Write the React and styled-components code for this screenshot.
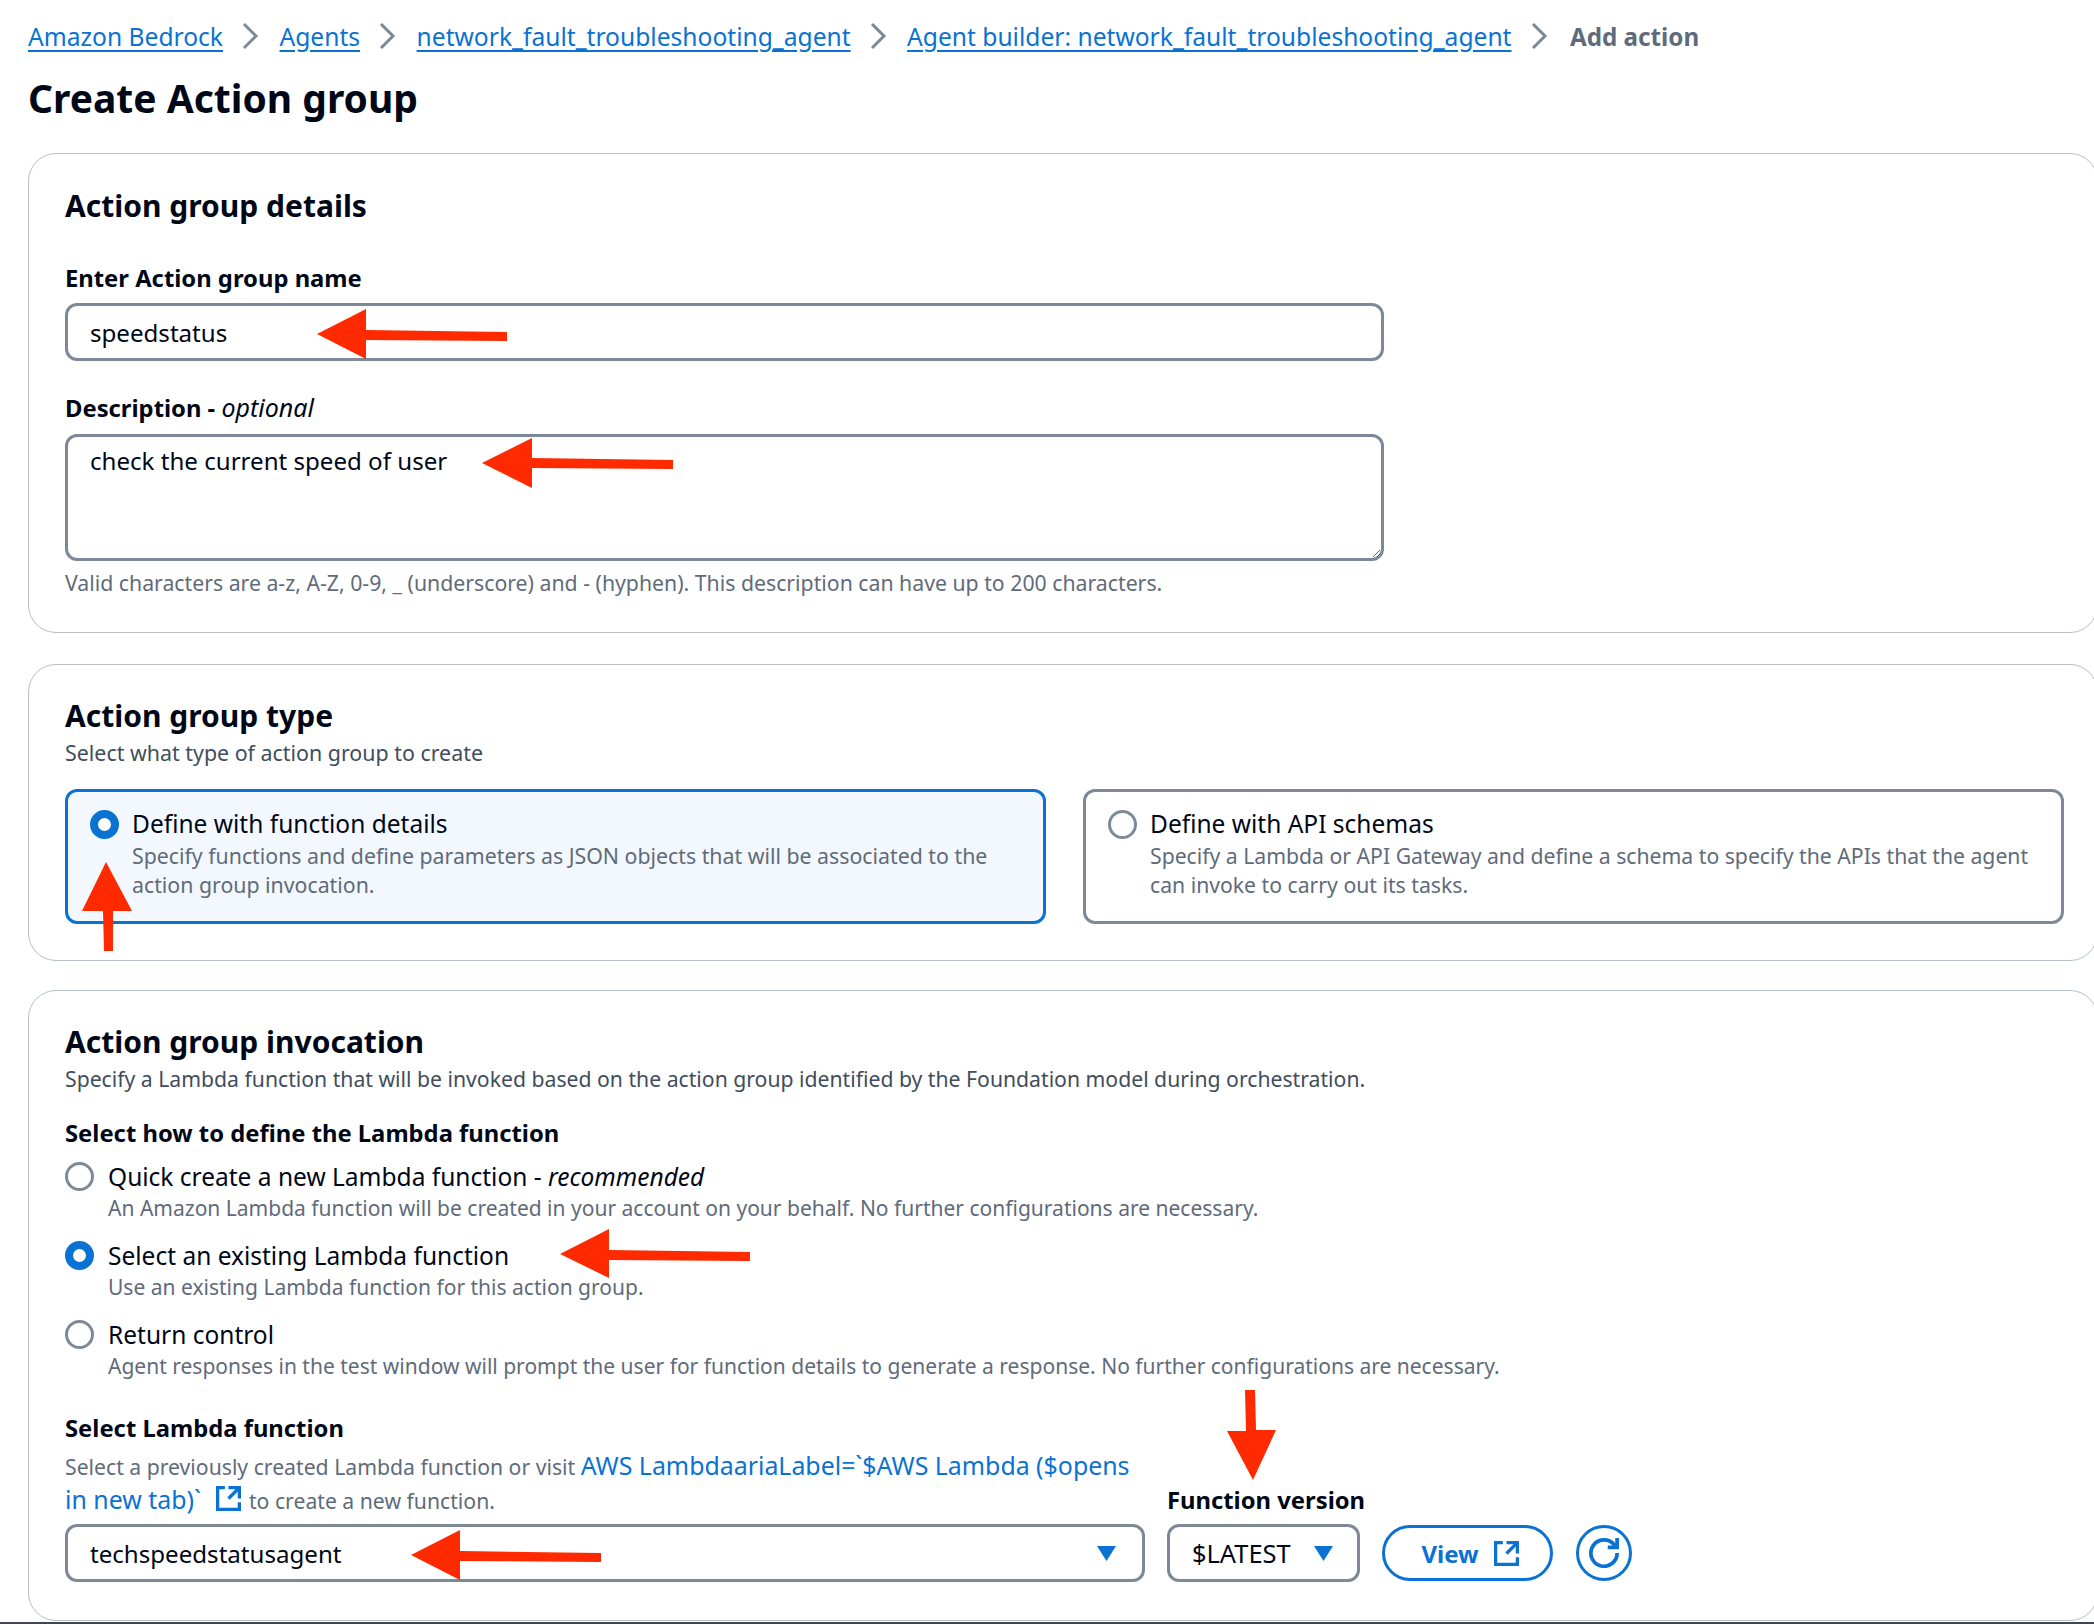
import React from 'react';
import styled, { createGlobalStyle } from 'styled-components';

const GlobalStyle = createGlobalStyle`
    html, body {
        margin: 0;
        padding: 0;
        background: #fff;
        overflow: hidden;
    }
    body {
        font-family: 'Noto Sans', 'Liberation Sans', sans-serif;
        color: #000716;
    }
`;

const Page = styled.div`
    position: relative;
    width: 2094px;
    height: 1624px;
    overflow: hidden;
    box-sizing: border-box;
    padding: 18px 0 0 28px;
    border-bottom: 2px solid #424650;
`;

const Breadcrumbs = styled.nav`
    display: flex;
    align-items: center;
    height: 36px;
    font-size: 24.6px;
`;

const Crumb = styled.a`
    color: #0972d3;
    text-decoration: underline;
    text-underline-offset: 4px;
    white-space: nowrap;
`;

const CurrentCrumb = styled.span`
    color: #5f6b7a;
    font-weight: 700;
    font-size: 24.2px;
    margin-left: 2px;
    white-space: nowrap;
`;

const ChevronWrap = styled.span`
    display: flex;
    justify-content: center;
    width: 56.5px;
    color: #7d8998;
`;

const PageTitle = styled.h1`
    margin: 15px 0 26px;
    height: 58px;
    line-height: 58px;
    font-size: 39px;
    font-weight: 700;
`;

const Card = styled.section`
    box-sizing: border-box;
    width: 2070px;
    height: ${(p) => p.$height}px;
    margin-bottom: ${(p) => p.$gap || 0}px;
    padding: ${(p) => p.$top || 29}px 32px 0 36px;
    border: 1.5px solid #b6bec9;
    border-radius: 28px;
`;

const CardTitle = styled.h2`
    margin: 0;
    height: 44px;
    line-height: 44px;
    font-size: 30px;
    font-weight: 700;
`;

const CardSub = styled.p`
    margin: 0;
    height: 30px;
    line-height: 30px;
    font-size: ${(p) => p.$size || 21.2}px;
    color: #414d5c;
`;

const FieldLabel = styled.label`
    display: block;
    height: 32px;
    line-height: 32px;
    font-size: 23.8px;
    font-weight: 700;
    margin-top: ${(p) => p.$top || 0}px;
    margin-bottom: ${(p) => p.$bottom || 0}px;
    white-space: nowrap;

    em {
        font-weight: 400;
        font-size: 25px;
    }
`;

const TextInput = styled.input`
    display: block;
    box-sizing: border-box;
    width: 1319px;
    height: 58px;
    padding: 0 22px;
    border: 3px solid #7d8998;
    border-radius: 12px;
    outline: none;
    font: 400 24.1px 'Noto Sans', sans-serif;
    color: #000716;
`;

const TextArea = styled.textarea`
    display: block;
    box-sizing: border-box;
    width: 1319px;
    height: 127px;
    padding: 6px 22px;
    border: 3px solid #7d8998;
    border-radius: 12px;
    outline: none;
    resize: vertical;
    font: 400 24.1px/36px 'Noto Sans', sans-serif;
    color: #000716;
`;

const Hint = styled.p`
    margin: 7px 0 0;
    height: 30px;
    line-height: 30px;
    font-size: 21.25px;
    color: #5f6b7a;
`;

const TileGrid = styled.div`
    display: grid;
    grid-template-columns: 981px 981px;
    gap: 37px;
    margin-top: 21px;
`;

const Radio = styled.span`
    flex: none;
    display: block;
    box-sizing: border-box;
    width: 29px;
    height: 29px;
    margin-top: 3px;
    border-radius: 50%;
    background: #fff;
    border: ${(p) => (p.$checked ? '8px solid #0972d3' : '3px solid #7d8998')};
`;

const Tile = styled.div`
    box-sizing: border-box;
    height: 135px;
    display: flex;
    gap: 13px;
    padding: 14px 20px 0 22px;
    border: 3px solid ${(p) => (p.$active ? '#0972d3' : '#7d8998')};
    border-radius: 12px;
    background: ${(p) => (p.$active ? '#f2f8fd' : '#fff')};

    ${Radio} {
        margin-top: 4px;
    }
`;

const OptionText = styled.div`
    min-width: 0;
`;

const OptionTitle = styled.div`
    height: 35px;
    line-height: 35px;
    font-size: 24.5px;
    white-space: nowrap;
`;

const OptionDesc = styled.div`
    line-height: 29px;
    font-size: ${(p) => p.$size}px;
    color: #5f6b7a;
`;

const RadioList = styled.div`
    display: flex;
    flex-direction: column;
    gap: 15px;
    margin-top: 10px;
`;

const RadioRow = styled.div`
    display: flex;
    gap: 14px;
`;

const LambdaRow = styled.div`
    display: flex;
    align-items: flex-end;
`;

const LambdaColumn = styled.div`
    width: 1080px;
    flex: none;
`;

const LambdaHelp = styled.p`
    margin: 5px 0 7px;
    line-height: 33px;
    font-size: 21.2px;
    color: #5f6b7a;
`;

const HelpLink = styled.a`
    color: #0972d3;
    font-size: 24.9px;
`;

const IconSlot = styled.span`
    display: inline-flex;
    vertical-align: -4px;
    margin: 0 6px 0 13px;
    color: #0972d3;
`;

const Select = styled.div`
    box-sizing: border-box;
    width: ${(p) => p.$width}px;
    height: 58px;
    display: flex;
    align-items: center;
    justify-content: space-between;
    padding: 0 ${(p) => p.$right}px 0 22px;
    border: 3px solid #7d8998;
    border-radius: 12px;
    font-size: ${(p) => p.$size || 24.1}px;
`;

const VersionColumn = styled.div`
    margin-left: 22px;
    flex: none;
`;

const ViewButton = styled.button`
    box-sizing: border-box;
    width: 171px;
    height: 56px;
    margin: 0 0 1px 17px;
    padding: 0 0 0 7px;
    display: flex;
    align-items: center;
    justify-content: center;
    gap: 13px;
    background: #fff;
    border: 3px solid #0972d3;
    border-radius: 28px;
    color: #0972d3;
    font: 700 24px 'Noto Sans', sans-serif;
`;

const RefreshButton = styled.button`
    box-sizing: border-box;
    width: 56px;
    height: 56px;
    margin: 0 0 1px 23px;
    padding: 0;
    display: flex;
    align-items: center;
    justify-content: center;
    background: #fff;
    border: 3px solid #0972d3;
    border-radius: 50%;
    color: #0972d3;
`;

const ArrowLayer = styled.svg`
    position: absolute;
    left: 0;
    top: 0;
    pointer-events: none;
`;

const Chevron = () => (
    <ChevronWrap>
        <svg width="18" height="28" viewBox="0 0 18 28" fill="none" stroke="currentColor" strokeWidth="3">
            <path d="M2 2l12 12L2 26" />
        </svg>
    </ChevronWrap>
);

const Caret = () => (
    <svg width="19" height="16" viewBox="0 0 19 16" fill="#0972d3">
        <path d="M0 1h19L9.5 16z" />
    </svg>
);

const ExternalIcon = () => (
    <svg width="29" height="29" viewBox="0 0 16 16" fill="none" stroke="currentColor" strokeWidth="1.8">
        <path d="M14 8V2H8M14 2L8 8M6 2H2v12h12v-4" />
    </svg>
);

const RefreshIcon = () => (
    <svg width="30" height="30" viewBox="0 0 16 16" fill="none" stroke="currentColor" strokeWidth="2">
        <path d="M10 5h5V0" />
        <path d="M15 8a7 7 0 1 1-1.6-4.4L15 5" />
    </svg>
);

// red annotation arrows, points taken off the screenshot
const arrows = [
    '317,334 366,309 366,330 507,332 507,341 366,340 366,359',
    '482,463 532,438 532,458 673,460 673,469 532,468 532,488',
    '106,862 132,911 113,911 113,951 104,951 103,911 82,911',
    '560,1254 609,1229 609,1250 750,1252 750,1261 609,1260 609,1278',
    '411,1555 460,1530 460,1551 601,1553 601,1562 460,1561 460,1580',
    '1253,1480 1227,1431 1246,1431 1245,1390 1255,1390 1256,1430 1276,1430',
];

const options = [
    {
        title: <>Quick create a new Lambda function - <em>recommended</em></>,
        desc: 'An Amazon Lambda function will be created in your account on your behalf. No further configurations are necessary.',
    },
    {
        title: 'Select an existing Lambda function',
        desc: 'Use an existing Lambda function for this action group.',
        checked: true,
    },
    {
        title: 'Return control',
        desc: 'Agent responses in the test window will prompt the user for function details to generate a response. No further configurations are necessary.',
    },
];

const App = () => (
    <Page>
        <GlobalStyle />
        <Breadcrumbs>
            <Crumb>Amazon Bedrock</Crumb>
            <Chevron />
            <Crumb>Agents</Crumb>
            <Chevron />
            <Crumb>network_fault_troubleshooting_agent</Crumb>
            <Chevron />
            <Crumb>Agent builder: network_fault_troubleshooting_agent</Crumb>
            <Chevron />
            <CurrentCrumb>Add action</CurrentCrumb>
        </Breadcrumbs>
        <PageTitle>Create Action group</PageTitle>

        <Card $height={480} $gap={31} $top={30}>
            <CardTitle>Action group details</CardTitle>
            <FieldLabel $top={34} $bottom={9}>Enter Action group name</FieldLabel>
            <TextInput readOnly value="speedstatus" />
            <FieldLabel $top={30} $bottom={11}>Description - <em>optional</em></FieldLabel>
            <TextArea readOnly value="check the current speed of user" />
            <Hint>Valid characters are a-z, A-Z, 0-9, _ (underscore) and - (hyphen). This description can have up to 200 characters.</Hint>
        </Card>

        <Card $height={297} $gap={29}>
            <CardTitle>Action group type</CardTitle>
            <CardSub $size={21.4}>Select what type of action group to create</CardSub>
            <TileGrid>
                <Tile $active>
                    <Radio $checked />
                    <OptionText>
                        <OptionTitle>Define with function details</OptionTitle>
                        <OptionDesc $size={21.3}>Specify functions and define parameters as JSON objects that will be associated to the action group invocation.</OptionDesc>
                    </OptionText>
                </Tile>
                <Tile>
                    <Radio />
                    <OptionText>
                        <OptionTitle>Define with API schemas</OptionTitle>
                        <OptionDesc $size={21.2}>Specify a Lambda or API Gateway and define a schema to specify the APIs that the agent can invoke to carry out its tasks.</OptionDesc>
                    </OptionText>
                </Tile>
            </TileGrid>
        </Card>

        <Card $height={631}>
            <CardTitle>Action group invocation</CardTitle>
            <CardSub>Specify a Lambda function that will be invoked based on the action group identified by the Foundation model during orchestration.</CardSub>
            <FieldLabel $top={23}>Select how to define the Lambda function</FieldLabel>
            <RadioList>
                {options.map((o, i) => (
                    <RadioRow key={i}>
                        <Radio $checked={o.checked} />
                        <OptionText>
                            <OptionTitle>{o.title}</OptionTitle>
                            <OptionDesc $size={21.03}>{o.desc}</OptionDesc>
                        </OptionText>
                    </RadioRow>
                ))}
            </RadioList>
            <FieldLabel $top={31}>Select Lambda function</FieldLabel>
            <LambdaRow>
                <LambdaColumn>
                    <LambdaHelp>
                        Select a previously created Lambda function or visit{' '}
                        <HelpLink>AWS LambdaariaLabel=`$AWS Lambda ($opens in new tab)`</HelpLink>
                        <IconSlot><ExternalIcon /></IconSlot>
                        to create a new function.
                    </LambdaHelp>
                    <Select $width={1080} $right={26}>
                        techspeedstatusagent
                        <Caret />
                    </Select>
                </LambdaColumn>
                <VersionColumn>
                    <FieldLabel $bottom={8}>Function version</FieldLabel>
                    <Select $width={193} $right={24} $size={25.4}>
                        $LATEST
                        <Caret />
                    </Select>
                </VersionColumn>
                <ViewButton>
                    View
                    <ExternalIcon />
                </ViewButton>
                <RefreshButton><RefreshIcon /></RefreshButton>
            </LambdaRow>
        </Card>

        <ArrowLayer width="2094" height="1624" viewBox="0 0 2094 1624">
            {arrows.map((points) => (
                <polygon key={points} points={points} fill="#ff2a00" />
            ))}
        </ArrowLayer>
    </Page>
);

export default App;
